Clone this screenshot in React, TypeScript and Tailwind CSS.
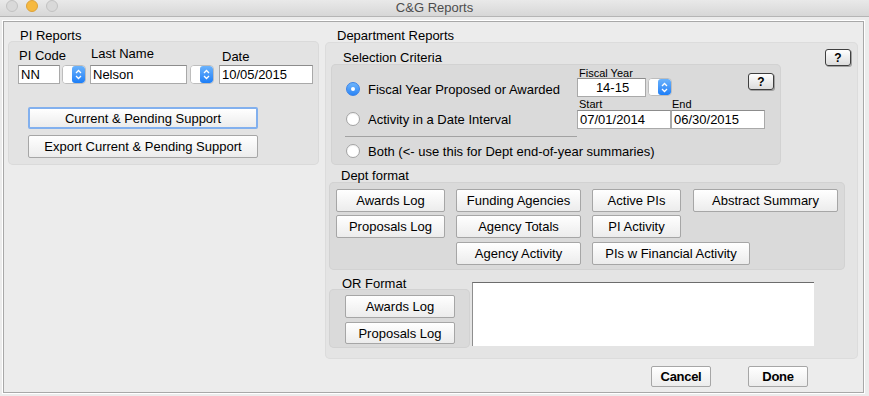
import React from "react";

type Props = { className?: string; children?: React.ReactNode };

const Field = ({ className = "", children }: Props) => (
  <div
    className={`h-[19px] border border-[#a9a9a9] border-t-[#8c8c8c] bg-white pl-[2px] text-[13px] leading-[17px] text-black ${className}`}
  >
    {children}
  </div>
);

const Btn = ({ className = "", children }: Props) => (
  <button
    type="button"
    className={`flex items-center justify-center rounded-[2px] border border-[#a6a6a6] bg-gradient-to-b from-white to-[#ececec] text-[13px] leading-[15px] text-black ${className}`}
  >
    {children}
  </button>
);

const Help = ({ className = "" }: Props) => (
  <div
    className={`flex h-[17px] w-[26px] items-center justify-center rounded-[3px] border border-[#3f3f3f] bg-gradient-to-b from-white to-[#dcdcdc] text-[12px] font-bold leading-none text-black shadow-[1px_1px_0_#a0a0a0] ${className}`}
  >
    ?
  </div>
);

const Stepper = ({ className = "" }: Props) => (
  <div className={`flex w-[24px] overflow-hidden rounded-[4px] border border-[#bdbdbd] bg-white ${className}`}>
    <div className="flex-1 bg-white" />
    <div className="flex w-[13px] items-center justify-center rounded-[3px] bg-gradient-to-b from-[#6ab2fb] to-[#1b7ef7]">
      <svg width="7" height="11" viewBox="0 0 7 11">
        <path d="M1 4 L3.5 1.5 L6 4 M1 7 L3.5 9.5 L6 7" stroke="white" strokeWidth="1.3" fill="none" />
      </svg>
    </div>
  </div>
);

const Radio = ({ on }: { on?: boolean }) =>
  on ? (
    <span className="flex h-[14px] w-[14px] shrink-0 items-center justify-center rounded-full border border-[#3b83e8] bg-gradient-to-b from-[#6db4fb] to-[#2985f6]">
      <span className="h-[4px] w-[4px] rounded-full bg-white" />
    </span>
  ) : (
    <span className="h-[14px] w-[14px] shrink-0 rounded-full border border-[#a3a3a3] bg-white shadow-[inset_0_1px_1px_rgba(0,0,0,0.06)]" />
  );

export default function App() {
  return (
    <div className="flex h-[396px] w-[869px] flex-col overflow-hidden bg-[#ececec] font-['Liberation_Sans',Arial,sans-serif] text-black">
      {/* title bar */}
      <div className="grid h-[17px] grid-cols-[1fr_auto_1fr] border-b border-[#b5b5b5] bg-gradient-to-b from-[#e9e9e9] to-[#d7d7d7]">
        <div className="flex items-start gap-[8px] pl-[6px]">
          <span className="h-[12px] w-[12px] rounded-full border border-[#c2c2c2] bg-[#d9d9d9]" />
          <span className="h-[12px] w-[12px] rounded-full border border-[#dca23a] bg-[#f6b940]" />
          <span className="h-[12px] w-[12px] rounded-full border border-[#c2c2c2] bg-[#d9d9d9]" />
        </div>
        <div className="text-[13px] leading-[15px] text-[#4d4d4d]">C&amp;G Reports</div>
        <div />
      </div>

      {/* window frame */}
      <div className="ml-[3px] mt-[4px] flex h-[372px] w-[861px] items-start border border-[#a8a8a8] shadow-[0_0_0_1px_#ffffff]">
        {/* PI Reports */}
        <div className="ml-[4px] w-[311px]">
          <div className="pl-[12px] pt-[7px] text-[13px] leading-[13px]">PI Reports</div>
          <div className="-mt-[1px] h-[124px] rounded-[5px] bg-[#e3e3e3] shadow-[inset_0_0_0_1px_#dadada]">
            <div className="flex h-[24px] items-start text-[13px] leading-[13px]">
              <div className="mt-[8px] w-[83px] pl-[11px]">PI Code</div>
              <div className="mt-[6px] w-[131px]">Last Name</div>
              <div className="mt-[9px]">Date</div>
            </div>
            <div className="flex items-start pl-[10px]">
              <Field className="w-[42px]">NN</Field>
              <Stepper className="ml-[2px] h-[19px]" />
              <Field className="ml-[4px] w-[97px]">Nelson</Field>
              <Stepper className="ml-[3px] h-[19px]" />
              <Field className="ml-[5px] w-[94px]">10/05/2015</Field>
            </div>
            <button
              type="button"
              className="ml-[20px] mt-[23px] flex h-[22px] w-[230px] items-center justify-center rounded-[2px] border-2 border-[#82b0ee] bg-gradient-to-b from-white to-[#ececec] text-[13px] leading-[15px]"
            >
              Current &amp; Pending Support
            </button>
            <Btn className="ml-[20px] mt-[6px] h-[23px] w-[230px]">Export Current &amp; Pending Support</Btn>
          </div>
        </div>

        {/* Department Reports */}
        <div className="ml-[6px] w-[533px]">
          <div className="pl-[12px] pt-[7px] text-[13px] leading-[13px]">Department Reports</div>
          <div className="h-[317px] rounded-[5px] bg-[#e4e4e4] shadow-[inset_0_0_0_1px_#dcdcdc]">
            <div className="flex h-[22px] items-start">
              <div className="ml-[18px] mt-[9px] text-[13px] leading-[13px]">Selection Criteria</div>
              <Help className="ml-auto mr-[7px] mt-[7px]" />
            </div>

            {/* Selection Criteria */}
            <div className="ml-[6px] h-[101px] w-[450px] rounded-[5px] bg-[#dadada] shadow-[inset_0_0_0_1px_#d2d2d2]">
              <div className="flex h-[67px] items-start">
                <div className="w-[246px] pl-[15px] text-[13px] leading-[15px]">
                  <div className="mt-[18px] flex h-[14px] items-center gap-[8px]">
                    <Radio on />
                    <span>Fiscal Year Proposed or Awarded</span>
                  </div>
                  <div className="mt-[16px] flex h-[14px] items-center gap-[8px]">
                    <Radio />
                    <span>Activity in a Date Interval</span>
                  </div>
                </div>
                <div className="flex-1">
                  <div className="mt-[4px] h-[10px] pl-[2px] text-[11px] leading-[10px]">Fiscal Year</div>
                  <div className="flex items-start">
                    <Field className="h-[18px] w-[69px] pl-0 text-center leading-[16px]">14-15</Field>
                    <Stepper className="ml-[2px] h-[18px]" />
                    <Help className="-mt-[5px] ml-[76px]" />
                  </div>
                  <div className="mt-[2px] flex h-[11px] text-[11px] leading-[10px]">
                    <div className="w-[94px] pl-[2px]">Start</div>
                    <div className="pl-[1px]">End</div>
                  </div>
                  <div className="flex">
                    <Field className="w-[94px]">07/01/2014</Field>
                    <Field className="w-[94px]">06/30/2015</Field>
                  </div>
                </div>
              </div>
              <div className="ml-[14px] mt-[5px] h-px w-[232px] bg-[#a2a2a2]" />
              <div className="mt-[7px] flex h-[14px] items-center gap-[8px] pl-[15px] text-[13px] leading-[15px]">
                <Radio />
                <span>Both (&lt;- use this for Dept end-of-year summaries)</span>
              </div>
            </div>

            {/* Dept format */}
            <div className="ml-[16px] mt-[4px] text-[13px] leading-[13px]">Dept format</div>
            <div className="ml-[4px] h-[88px] w-[516px] rounded-[5px] bg-[#dadada] pl-[7px] pt-[7px] shadow-[inset_0_0_0_1px_#d2d2d2]">
              <div className="flex">
                <Btn className="h-[23px] w-[109px]">Awards Log</Btn>
                <Btn className="ml-[11px] h-[23px] w-[125px]">Funding Agencies</Btn>
                <Btn className="ml-[11px] h-[23px] w-[89px]">Active PIs</Btn>
                <Btn className="ml-[12px] h-[23px] w-[145px]">Abstract Summary</Btn>
              </div>
              <div className="mt-[3px] flex">
                <Btn className="h-[23px] w-[109px]">Proposals Log</Btn>
                <Btn className="ml-[11px] h-[23px] w-[125px]">Agency Totals</Btn>
                <Btn className="ml-[11px] h-[23px] w-[89px]">PI Activity</Btn>
              </div>
              <div className="mt-[4px] flex pl-[120px]">
                <Btn className="h-[23px] w-[125px]">Agency Activity</Btn>
                <Btn className="ml-[11px] h-[23px] w-[158px]">PIs w Financial Activity</Btn>
              </div>
            </div>

            {/* OR Format */}
            <div className="mt-[7px] flex items-start">
              <div className="ml-[4px] w-[141px]">
                <div className="pl-[13px] text-[13px] leading-[13px]">OR Format</div>
                <div className="-mt-px h-[59px] rounded-[5px] bg-[#dadada] pl-[16px] pt-[6px] shadow-[inset_0_0_0_1px_#d2d2d2]">
                  <Btn className="h-[23px] w-[110px]">Awards Log</Btn>
                  <Btn className="mt-[4px] h-[22px] w-[110px]">Proposals Log</Btn>
                </div>
              </div>
              <div className="ml-[2px] mt-[5px] h-[64px] w-[342px] border-l border-t border-l-[#8e8e8e] border-t-[#6c6c6c] bg-white" />
            </div>
          </div>

          <div className="mt-[7px] flex">
            <Btn className="ml-[326px] h-[21px] w-[60px] text-[11px] font-bold tracking-[-0.3px]">Cancel</Btn>
            <Btn className="ml-[37px] h-[21px] w-[60px] text-[11px] font-bold tracking-[-0.3px]">Done</Btn>
          </div>
        </div>
      </div>
    </div>
  );
}
